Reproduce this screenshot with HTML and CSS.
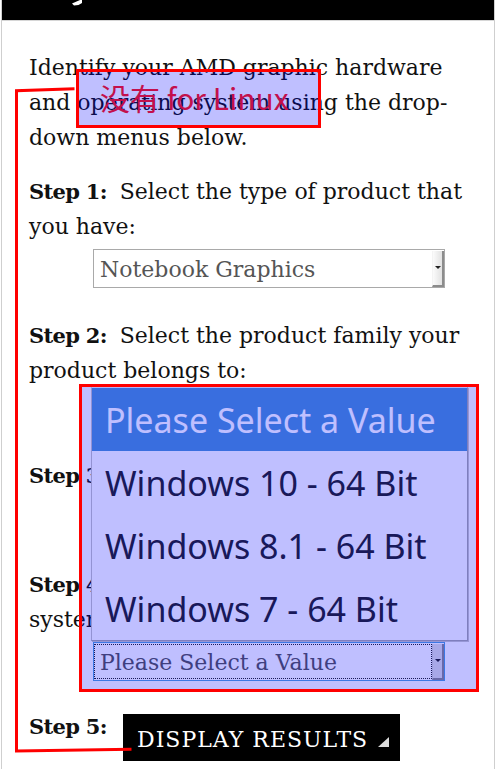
FILE: index.html
```html
<!DOCTYPE html>
<html lang="en">
<head>
<meta charset="utf-8">
<title>AMD Driver Selector</title>
<link rel="stylesheet" href="styles.css">
</head>
<body>
<div class="page">
  <header class="topbar">
    <svg class="logo-bit" width="14" height="8" viewBox="0 0 14 8"><path d="M0 3.5 L8 0 L10 0 L10 3 Q7 5.5 2 5.5 Z" fill="#fff"/></svg>
  </header>
  <main class="content">
    <p class="intro">Identify your AMD graphic hardware and operating system using the drop-down menus below.</p>

    <div class="step">
      <p class="q"><b class="label">Step 1:</b><span class="gap"></span><span>Select the type of product that</span> <span>you have:</span></p>
      <div class="select"><span class="val">Notebook Graphics</span><span class="arrow"></span></div>
    </div>

    <div class="step">
      <p class="q"><b class="label">Step 2:</b><span class="gap"></span><span>Select the product family your</span> <span>product belongs to:</span></p>
      <div class="select short"><span class="val">Radeon R9 Series</span><span class="arrow"></span></div>
    </div>

    <div class="step">
      <p class="q"><b class="label">Step 3:</b><span class="gap"></span><span>Select your product:</span></p>
      <div class="select"><span class="val">Radeon R9 M395X</span><span class="arrow"></span></div>
    </div>

    <div class="step last">
      <p class="q"><b class="label">Step 4:</b><span class="gap"></span><span>Select the supported operating</span> <span>system that you have:</span></p>
      <div class="select focused"><span class="val">Please Select a Value</span><span class="arrow"></span></div>
    </div>

    <div class="step5">
      <b class="label wide">Step 5:</b>
      <a class="btn">DISPLAY RESULTS<span class="tri"></span></a>
    </div>
  </main>
</div>

<ul class="popup">
  <li class="active">Please Select a Value</li>
  <li>Windows 10 - 64 Bit</li>
  <li>Windows 8.1 - 64 Bit</li>
  <li>Windows 7 - 64 Bit</li>
</ul>

<div class="note">没有 for Linux</div>
<div class="mark-box"></div>

<svg class="bracket" width="500" height="769" viewBox="0 0 500 769">
  <polyline points="74.5,88.8 16.5,90.8 16.5,751 131.5,749.3" fill="none" stroke="#ff0000" stroke-width="3" stroke-linejoin="miter"/>
</svg>
</body>
</html>
```

FILE: styles.css
```css
html, body {
  margin: 0;
  padding: 0;
  background: #fff;
}

body {
  position: relative;
  width: 500px;
  height: 769px;
  overflow: hidden;
  font-family: "DejaVu Serif", serif;
  color: #111;
}

.page {
  margin-left: 1px;
  width: 494px;
  min-height: 769px;
  box-sizing: border-box;
  border-left: 1px solid #cfcfcf;
  border-right: 1px solid #cfcfcf;
}

.topbar {
  height: 20px;
  background: #000;
  border-bottom: 1px solid #d6d6d6;
}

.logo-bit {
  display: block;
  margin-left: 70px;
}

.content {
  padding: 29px 14px 0 27px;
  font-size: 22px;
  line-height: 35px;
}

.intro {
  margin: 0 0 19px;
}

.q {
  margin: 0;
}

.label {
  font-weight: bold;
  font-size: 21px;
  letter-spacing: -0.7px;
}

.gap {
  display: inline-block;
  width: 13px;
}

.step {
  margin-bottom: 30px;
}

.step.last {
  margin-bottom: 28px;
}

.select {
  margin: 5px 0 0 64px;
  width: 352px;
  height: 39px;
  box-sizing: border-box;
  border: 1px solid #a9a9a9;
  background: #fff;
  display: flex;
  color: #555;
  font-size: 22px;
}

.select.short {
  height: 35px;
}

.select .val {
  flex: 1;
  padding: 2px 0 0 6px;
  line-height: 35px;
  white-space: nowrap;
  overflow: hidden;
}

.select .arrow {
  position: relative;
  width: 12px;
  margin-top: 1px;
  box-sizing: border-box;
  background: linear-gradient(to right, #fbfbfb, #e2e2e2);
  border-left: 1px solid #f4f4f4;
  border-right: 2px solid #8c8c8c;
  border-bottom: 2px solid #8c8c8c;
}

.select .arrow::after {
  content: "";
  position: absolute;
  left: 2px;
  top: 50%;
  margin-top: -2px;
  border-left: 3px solid transparent;
  border-right: 3px solid transparent;
  border-top: 3px solid #222;
}

.select.focused {
  border-color: #50a0dd;
}

.select.focused .val {
  outline: 1px dotted #222;
  outline-offset: -1px;
  margin: 1px 0 1px 0;
  padding-top: 1px;
}

.select.focused .arrow {
  background: #e0e0e0;
  border-left: 1px solid #d0d0d0;
  border-right: 2px solid #8c8c8c;
  border-bottom: 2px solid #8c8c8c;
}

.step5 {
  display: flex;
  align-items: flex-start;
}

.step5 .label.wide {
  flex: none;
  width: 94px;
  line-height: 35px;
}

.btn {
  display: block;
  margin-top: 5px;
  height: 47px;
  box-sizing: border-box;
  padding: 6px 11px 2px 14px;
  line-height: 39px;
  background: #000;
  color: #fff;
  font-size: 22px;
  letter-spacing: 1px;
  white-space: nowrap;
  text-decoration: none;
}

.btn .tri {
  display: inline-block;
  width: 0;
  height: 0;
  margin-left: 10px;
  border-left: 11px solid transparent;
  border-bottom: 10px solid #dcdcdc;
}

/* open dropdown list */
.popup {
  position: absolute;
  left: 91px;
  top: 387px;
  width: 377px;
  box-sizing: border-box;
  margin: 0;
  padding: 0;
  list-style: none;
  background: #fff;
  border: 1px solid #a8a8a8;
  border-top-color: #f2f2f2;
  border-left-color: #c4c4c4;
  box-shadow: 1px 1px 0 #c8c8c8;
  font-family: "Noto Sans", sans-serif;
  font-size: 34px;
  color: #222;
  z-index: 5;
}

.popup li {
  height: 63px;
  line-height: 65px;
  padding-left: 13px;
  white-space: nowrap;
}

.popup li.active {
  background: #4d93d5;
  color: #fff;
}

/* annotations */
.note {
  position: absolute;
  left: 76px;
  top: 69px;
  width: 245px;
  height: 59px;
  box-sizing: border-box;
  border: 3px solid #ff0000;
  background: rgba(0, 0, 255, 0.25);
  padding-left: 21px;
  font-family: "Noto Sans CJK SC", "Noto Sans", sans-serif;
  font-size: 30px;
  line-height: 51px;
  color: #c3104c;
  white-space: nowrap;
  z-index: 6;
}

.mark-box {
  position: absolute;
  left: 79px;
  top: 384px;
  width: 400px;
  height: 308px;
  box-sizing: border-box;
  border: 3px solid #ff0000;
  background: rgba(0, 0, 255, 0.25);
  z-index: 6;
}

.bracket {
  position: absolute;
  left: 0;
  top: 0;
  pointer-events: none;
  z-index: 7;
}
```
